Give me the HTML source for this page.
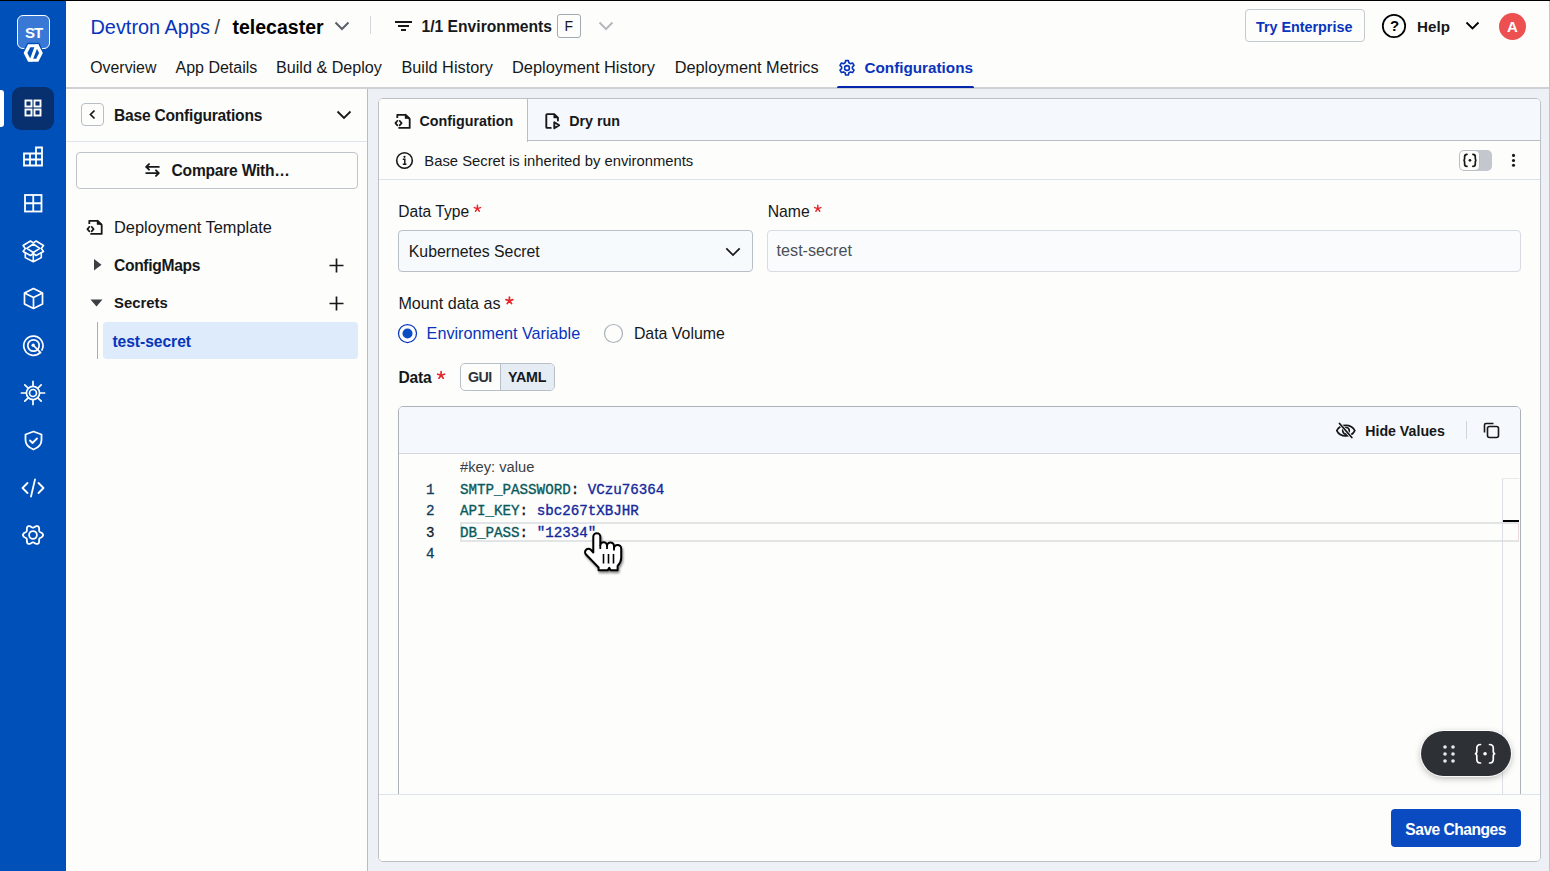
<!DOCTYPE html>
<html><head><meta charset="utf-8">
<style>
*{box-sizing:border-box;margin:0;padding:0}
html,body{width:1550px;height:871px;overflow:hidden;background:#fdfdfc;font-family:"Liberation Sans",sans-serif;color:#000;position:relative}
.abs{position:absolute}
.t{position:absolute;white-space:nowrap;line-height:1}
#topline{left:0;top:0;width:1550px;height:1px;background:#000;z-index:50}
#rightline{left:1549px;top:1px;width:1px;height:870px;background:#c4c6c8;z-index:50}
#nav{left:0;top:0;width:66px;height:871px;background:#0050b9}
</style></head><body>
<div id="topline" class="abs"></div>
<div id="rightline" class="abs"></div>
<div id="nav" class="abs">
  <div class="abs" style="left:17px;top:15px;width:33px;height:34px;border:1.2px solid #fff;border-radius:6px;background:#3a78d6"></div>
  <div class="t" style="left:25px;top:24.5px;font-size:15px;font-weight:bold;color:#fff;letter-spacing:-1px">ST</div>
  <svg class="abs" style="left:20px;top:40px" width="26" height="25" viewBox="0 0 26 25"><path d="M3.4 13 L8 4 H18.5 L23 13 L18.5 22 H8 Z" fill="#0050b9" stroke="#0050b9" stroke-width="2.4" stroke-linejoin="round"/><path d="M3.6 13 L8.1 4.2 H18.4 L22.8 13 L18.4 21.8 H8.1 Z" fill="#fff"/><path d="M7.4 13 L10.3 7.3 H16.2 L19.1 13 L16.2 18.7 H10.3 Z" fill="#0050b9"/><path d="M9 21.6 L15.4 4.4 H18.6 L12.2 21.6 Z" fill="#fff"/></svg>
  <div class="abs" style="left:0;top:90px;width:4px;height:37px;background:#fff;border-radius:0 3px 3px 0"></div>
  <div class="abs" style="left:12px;top:87px;width:42px;height:43px;background:#08306e;border-radius:9px"></div>
  <svg class="abs" style="left:24px;top:99px" width="19" height="19" viewBox="0 0 19 19" fill="none" stroke="#fff" stroke-width="1.9"><rect x="1.5" y="1.5" width="6" height="6"/><rect x="10.5" y="1.5" width="6" height="6"/><rect x="1.5" y="10.5" width="6" height="6"/><rect x="10.5" y="10.5" width="6" height="6"/></svg>
  <svg class="abs" style="left:23px;top:146px" width="21" height="21" viewBox="0 0 21 21" fill="none" stroke="#fff" stroke-width="1.8" stroke-linecap="square"><path d="M1 7.5 H19 M1 13.5 H19 M1 19.5 H19 M1 7.5 V19.5 M7 7.5 V19.5 M13 1.5 V19.5 M19 1.5 V19.5 M13 1.5 H19"/></svg>
  <svg class="abs" style="left:24px;top:194px" width="19" height="19" viewBox="0 0 19 19" fill="none" stroke="#fff" stroke-width="1.8"><rect x="1" y="1" width="16.5" height="16.5"/><path d="M9.25 1 V17.5 M1 9.25 H17.5"/></svg>
  <svg class="abs" style="left:20px;top:238px" width="26" height="26" viewBox="0 0 26 26" fill="none" stroke="#fff" stroke-width="1.6" stroke-linejoin="round"><path d="M3.1 7.5 L10.5 3 L13.3 4.8 L16.1 3 L23.5 7.5 L21.3 10.5 L23.5 13.5 L16.1 17.5 L13.3 15.5 L10.5 17.5 L3.1 13.5 L5.3 10.5 Z"/><path d="M13.3 6 L19.8 10.3 L13.3 14.5 L6.8 10.3 Z"/><path d="M5.3 14.8 V19.6 L13.3 23.8 L21.3 19.6 V14.8 M13.3 15.5 V23.8"/></svg>
  <svg class="abs" style="left:23px;top:287px" width="21" height="23" viewBox="0 0 21 23" fill="none" stroke="#fff" stroke-width="1.7" stroke-linejoin="round"><path d="M10.5 1.5 L19.5 6 V17 L10.5 21.5 L1.5 17 V6 Z"/><path d="M1.5 6 L10.5 10.5 L19.5 6 M10.5 10.5 V21.5"/></svg>
  <svg class="abs" style="left:22px;top:334.3px" width="23" height="23" viewBox="0 0 23 23" fill="none" stroke="#fff" stroke-width="1.7"><path d="M18.3 18.3 A9.6 9.6 0 1 1 19.6 16.6"/><circle cx="11.5" cy="11.5" r="5.7"/><path d="M11.5 11.5 L18.6 18.6" stroke-linecap="round"/><circle cx="11.2" cy="11.2" r="1.7" fill="#fff" stroke="none"/></svg>
  <svg class="abs" style="left:20.2px;top:380.3px" width="26" height="26" viewBox="0 0 26 26" fill="none" stroke="#fff" stroke-width="1.7" stroke-linecap="round"><circle cx="13" cy="13" r="6.6"/><circle cx="13" cy="13" r="3.5"/><path d="M13.00 5.80 L13.00 1.40 M18.09 7.91 L21.20 4.80 M20.20 13.00 L24.60 13.00 M18.09 18.09 L21.20 21.20 M13.00 20.20 L13.00 24.60 M7.91 18.09 L4.80 21.20 M5.80 13.00 L1.40 13.00 M7.91 7.91 L4.80 4.80 "/></svg>
  <svg class="abs" style="left:23px;top:430px" width="21" height="21" viewBox="0 0 21 21" fill="none" stroke="#fff" stroke-width="1.8" stroke-linejoin="round" stroke-linecap="round"><path d="M10.5 1.5 L18.5 4.5 V10 C18.5 15 14.5 18 10.5 19.5 C6.5 18 2.5 15 2.5 10 V4.5 Z"/><path d="M7 10.5 L9.5 13 L14 8.5"/></svg>
  <svg class="abs" style="left:21px;top:478px" width="24" height="20" viewBox="0 0 24 20" fill="none" stroke="#fff" stroke-width="1.8" stroke-linecap="round" stroke-linejoin="round"><path d="M6.5 5 L1.5 10 L6.5 15 M17.5 5 L22.5 10 L17.5 15 M14 1.5 L10 18.5"/></svg>
  <svg class="abs" style="left:21.3px;top:523.2px" width="24" height="24" viewBox="0 0 24 24" fill="none" stroke="#fff" stroke-width="1.8" stroke-linejoin="round"><path d="M22.05 12.00 L21.97 12.52 L21.74 13.02 L21.38 13.49 L20.92 13.90 L20.40 14.25 L19.88 14.56 L19.38 14.83 L18.95 15.09 L18.61 15.37 L18.37 15.67 L18.22 16.04 L18.15 16.47 L18.14 16.98 L18.16 17.54 L18.15 18.15 L18.10 18.78 L17.97 19.38 L17.76 19.92 L17.44 20.37 L17.02 20.70 L16.53 20.90 L15.98 20.95 L15.40 20.86 L14.82 20.67 L14.25 20.40 L13.72 20.10 L13.24 19.81 L12.80 19.57 L12.39 19.41 L12.00 19.35 L11.61 19.41 L11.20 19.57 L10.76 19.81 L10.28 20.10 L9.75 20.40 L9.18 20.67 L8.60 20.86 L8.02 20.95 L7.47 20.90 L6.98 20.70 L6.56 20.37 L6.24 19.92 L6.03 19.38 L5.90 18.78 L5.85 18.15 L5.84 17.54 L5.86 16.98 L5.85 16.47 L5.78 16.04 L5.63 15.67 L5.39 15.37 L5.05 15.09 L4.62 14.83 L4.12 14.56 L3.60 14.25 L3.08 13.90 L2.62 13.49 L2.26 13.02 L2.03 12.52 L1.95 12.00 L2.03 11.48 L2.26 10.98 L2.62 10.51 L3.08 10.10 L3.60 9.75 L4.12 9.44 L4.62 9.17 L5.05 8.91 L5.39 8.63 L5.63 8.33 L5.78 7.96 L5.85 7.53 L5.86 7.02 L5.84 6.46 L5.85 5.85 L5.90 5.22 L6.03 4.62 L6.24 4.08 L6.56 3.63 L6.97 3.30 L7.47 3.10 L8.02 3.05 L8.60 3.14 L9.18 3.33 L9.75 3.60 L10.28 3.90 L10.76 4.19 L11.20 4.43 L11.61 4.59 L12.00 4.65 L12.39 4.59 L12.80 4.43 L13.24 4.19 L13.72 3.90 L14.25 3.60 L14.82 3.33 L15.40 3.14 L15.98 3.05 L16.53 3.10 L17.02 3.30 L17.44 3.63 L17.76 4.08 L17.97 4.62 L18.10 5.22 L18.15 5.85 L18.16 6.46 L18.14 7.02 L18.15 7.53 L18.22 7.96 L18.37 8.33 L18.61 8.63 L18.95 8.91 L19.38 9.17 L19.88 9.44 L20.40 9.75 L20.92 10.10 L21.38 10.51 L21.74 10.98 L21.97 11.48 L22.05 12.00 Z"/><circle cx="12" cy="12" r="3.9"/></svg>
</div>

<div class="abs" style="left:65px;top:0px;width:1px;height:871px;background:#1a42b0;z-index:5"></div>
<div class="abs" style="left:66px;top:0px;width:1484px;height:88px;background:#fdfdfc;border-bottom:1px solid #d6d8db"></div>
<div class="t" style="left:90.50px;top:18.00px;font-size:19.9px;color:#0734bb;">Devtron Apps</div>
<div class="t" style="left:214.50px;top:17.00px;font-size:20px;color:#3b3f44;">/</div>
<div class="t" style="left:232.50px;top:18.00px;font-size:19.5px;font-weight:bold;color:#000;">telecaster</div>
<svg class="abs" style="left:334px;top:21px;" width="16" height="10" viewBox="0 0 16 10" ><path d="M1.5 1.5 L8 8 L14.5 1.5" fill="none" stroke="#5b6068" stroke-width="2"/></svg>
<div class="abs" style="left:370px;top:16px;width:1px;height:18px;background:#d3d7dc"></div>
<svg class="abs" style="left:394px;top:20px;" width="19" height="12" viewBox="0 0 19 12" ><path d="M1 2 H18 M4 6 H15 M7 10 H12" stroke="#16181a" stroke-width="1.8" fill="none"/></svg>
<div class="t" style="left:421.50px;top:19.00px;font-size:15.66px;font-weight:bold;color:#16181a;">1/1 Environments</div>
<div class="abs" style="left:557px;top:14px;width:24px;height:24px;border:1px solid #a3a9b0;border-radius:3px;background:#fdfdfc"></div>
<div class="t" style="left:564.50px;top:19.00px;font-size:14px;color:#16181a;">F</div>
<svg class="abs" style="left:598px;top:21px;" width="16" height="10" viewBox="0 0 16 10" ><path d="M1.5 1.5 L8 8 L14.5 1.5" fill="none" stroke="#b5b9be" stroke-width="2"/></svg>
<div class="t" style="left:90.30px;top:60.00px;font-size:15.85px;color:#16181a;">Overview</div>
<div class="t" style="left:175.50px;top:60.00px;font-size:16.0px;color:#16181a;">App Details</div>
<div class="t" style="left:276.00px;top:59.00px;font-size:16.15px;color:#16181a;">Build &amp; Deploy</div>
<div class="t" style="left:401.40px;top:59.00px;font-size:16.3px;color:#16181a;">Build History</div>
<div class="t" style="left:512.00px;top:59.00px;font-size:16.4px;color:#16181a;">Deployment History</div>
<div class="t" style="left:674.70px;top:59.00px;font-size:16.3px;color:#16181a;">Deployment Metrics</div>
<svg class="abs" style="left:838px;top:59px;" width="18" height="18" viewBox="0 0 18 18" ><path d="M7.6 1.6 h2.8 l0.5 2.2 l1.6 0.9 l2.1 -0.7 l1.4 2.4 l-1.6 1.5 v1.8 l1.6 1.5 l-1.4 2.4 l-2.1 -0.7 l-1.6 0.9 l-0.5 2.2 h-2.8 l-0.5 -2.2 l-1.6 -0.9 l-2.1 0.7 l-1.4 -2.4 l1.6 -1.5 v-1.8 l-1.6 -1.5 l1.4 -2.4 l2.1 0.7 l1.6 -0.9 Z" fill="none" stroke="#0734bb" stroke-width="1.6" stroke-linejoin="round"/><circle cx="9" cy="9" r="2.4" fill="none" stroke="#0734bb" stroke-width="1.6"/></svg>
<div class="t" style="left:864.50px;top:60.00px;font-size:15.25px;font-weight:bold;color:#0734bb;">Configurations</div>
<div class="abs" style="left:837px;top:86px;width:137px;height:2.3px;background:#0326ad;border-radius:1.5px 1.5px 0 0;z-index:6"></div>
<div class="abs" style="left:1245px;top:9px;width:120px;height:33px;border:1px solid #c5cad1;border-radius:4px"></div>
<div class="t" style="left:1256.00px;top:20.00px;font-size:14.33px;font-weight:bold;color:#0734bb;">Try Enterprise</div>
<svg class="abs" style="left:1381px;top:13px;" width="26" height="26" viewBox="0 0 26 26" ><circle cx="13" cy="13" r="11.2" fill="none" stroke="#000" stroke-width="1.75"/></svg>
<div class="t" style="left:1390.00px;top:18.00px;font-size:15px;font-weight:bold;color:#000;">?</div>
<div class="t" style="left:1417.00px;top:19.00px;font-size:15.2px;font-weight:bold;color:#16181a;">Help</div>
<svg class="abs" style="left:1465px;top:21px;" width="15" height="10" viewBox="0 0 15 10" ><path d="M1.5 1.5 L7.5 7.5 L13.5 1.5" fill="none" stroke="#000" stroke-width="1.8"/></svg>
<div class="abs" style="left:1499px;top:13px;width:27px;height:27px;background:#ed5050;border-radius:50%"></div>
<div class="t" style="left:1507.00px;top:19.00px;font-size:15px;font-weight:bold;color:#fff;">A</div>
<div class="abs" style="left:66px;top:88px;width:302px;height:783px;background:#fdfdfc;border-right:1px solid #b9bdc3"></div>
<div class="abs" style="left:81px;top:103px;width:23px;height:23px;border:1px solid #b8bec6;border-radius:4px"></div>
<svg class="abs" style="left:81px;top:103px;" width="23" height="23" viewBox="0 0 23 23" ><path d="M13.5 7.5 L9.5 11.5 L13.5 15.5" fill="none" stroke="#16181a" stroke-width="1.7"/></svg>
<div class="t" style="left:114.00px;top:108.00px;font-size:15.6px;font-weight:bold;color:#16181a;letter-spacing:-0.228px;">Base Configurations</div>
<svg class="abs" style="left:336px;top:110px;" width="16" height="10" viewBox="0 0 16 10" ><path d="M1.5 1.5 L8 8 L14.5 1.5" fill="none" stroke="#16181a" stroke-width="1.8"/></svg>
<div class="abs" style="left:66px;top:141px;width:301px;height:1px;background:#dfe4ec"></div>
<div class="abs" style="left:76px;top:152px;width:282px;height:37px;border:1px solid #bfc4cb;border-radius:4px"></div>
<svg class="abs" style="left:144px;top:161px;" width="17" height="16" viewBox="0 0 17 16" ><path d="M2.2 5.9 H14.8 M5 3.1 L2.2 5.9 L5 8.7 M14.8 12.1 H2.2 M12 9.3 L14.8 12.1 L12 14.9" fill="none" stroke="#16181a" stroke-width="1.9" stroke-linecap="round" stroke-linejoin="round"/></svg>
<div class="t" style="left:171.60px;top:163.00px;font-size:15.6px;font-weight:bold;color:#16181a;letter-spacing:-0.233px;">Compare With…</div>
<svg class="abs" style="left:86px;top:218px;" width="18" height="18" viewBox="0 0 18 18" ><path d="M3.3 6 V2.8 H11.5 L15.7 7 V15.9 H4.4" fill="none" stroke="#16181a" stroke-width="1.8" stroke-linejoin="round"/><path d="M11.4 2.5 V6.2 H15.4 Z" fill="#16181a" stroke="#16181a" stroke-width="1.2" stroke-linejoin="round"/><path d="M3.4 8.8 L1.4 11.1 L3.4 13.4 M5.6 8.8 L7.6 11.1 L5.6 13.4" fill="none" stroke="#16181a" stroke-width="1.7" stroke-linecap="round" stroke-linejoin="round"/></svg>
<div class="t" style="left:114.00px;top:219.00px;font-size:16.37px;color:#16181a;">Deployment Template</div>
<svg class="abs" style="left:92px;top:258px;" width="12" height="14" viewBox="0 0 12 14" ><path d="M2 1 L9.5 6.8 L2 12.6 Z" fill="#3b3f44"/></svg>
<div class="t" style="left:114.00px;top:258.00px;font-size:15.6px;font-weight:bold;color:#16181a;letter-spacing:-0.318px;">ConfigMaps</div>
<svg class="abs" style="left:329px;top:258px;" width="15" height="15" viewBox="0 0 15 15" ><path d="M7.5 0.5 V14.5 M0.5 7.5 H14.5" stroke="#16181a" stroke-width="1.7"/></svg>
<svg class="abs" style="left:89px;top:298px;" width="15" height="10" viewBox="0 0 15 10" ><path d="M1.5 1.5 H13.5 L7.5 8.5 Z" fill="#3b3f44"/></svg>
<div class="t" style="left:114.00px;top:296.00px;font-size:14.9px;font-weight:bold;color:#16181a;">Secrets</div>
<svg class="abs" style="left:329px;top:296px;" width="15" height="15" viewBox="0 0 15 15" ><path d="M7.5 0.5 V14.5 M0.5 7.5 H14.5" stroke="#16181a" stroke-width="1.7"/></svg>
<div class="abs" style="left:97px;top:322px;width:1px;height:37px;background:#a8adb4"></div>
<div class="abs" style="left:103px;top:322px;width:255px;height:37px;background:#ddebfa;border-radius:4px"></div>
<div class="t" style="left:112.40px;top:334.00px;font-size:15.6px;font-weight:bold;color:#0734bb;letter-spacing:-0.030px;">test-secret</div>
<div class="abs" style="left:368px;top:88px;width:1182px;height:783px;background:#edf1f5"></div>
<div class="abs" style="left:66px;top:87px;width:1484px;height:2px;background:#cfd2d5"></div>
<div class="abs" style="left:378px;top:98px;width:1163px;height:764px;background:#fdfdfc;border:1px solid #bcc0c6;border-radius:5px;overflow:hidden">
<div class="abs" style="left:-379px;top:-99px;width:1550px;height:871px">
<div class="abs" style="left:378px;top:98px;width:1163px;height:43px;background:#f5f8fc;border-bottom:1px solid #b9bdc4"></div>
<div class="abs" style="left:378px;top:98px;width:150px;height:44px;background:#fdfdfc;border-right:1px solid #b9bdc4"></div>
<svg class="abs" style="left:394px;top:111.6px;" width="18" height="18" viewBox="0 0 18 18" ><path d="M3.3 6 V2.8 H11.5 L15.7 7 V15.9 H4.4" fill="none" stroke="#16181a" stroke-width="1.8" stroke-linejoin="round"/><path d="M11.4 2.5 V6.2 H15.4 Z" fill="#16181a" stroke="#16181a" stroke-width="1.2" stroke-linejoin="round"/><path d="M3.4 8.8 L1.4 11.1 L3.4 13.4 M5.6 8.8 L7.6 11.1 L5.6 13.4" fill="none" stroke="#16181a" stroke-width="1.7" stroke-linecap="round" stroke-linejoin="round"/></svg>
<div class="t" style="left:419.50px;top:114.00px;font-size:14.3px;font-weight:bold;color:#16181a;">Configuration</div>
<svg class="abs" style="left:538px;top:106px;" width="28" height="28" viewBox="0 0 28 28" ><path d="M12.8 21.9 H9 Q8.3 21.9 8.3 21 V9 Q8.3 8.1 9.2 8.1 H16.2 L19.9 11.6 V14.5" fill="none" stroke="#16181a" stroke-width="1.9" stroke-linejoin="round" stroke-linecap="round"/><path d="M16 8.3 V11.6 H19.6 Z" fill="#16181a" stroke="#16181a" stroke-width="1.1" stroke-linejoin="round"/><path d="M16.3 16.2 L21.2 19.2 L16.3 22.2 Z" fill="none" stroke="#16181a" stroke-width="1.9" stroke-linejoin="round"/></svg>
<div class="t" style="left:569.20px;top:114.00px;font-size:14.3px;font-weight:bold;color:#16181a;">Dry run</div>
<svg class="abs" style="left:395px;top:151px;" width="19" height="19" viewBox="0 0 19 19" ><circle cx="9.5" cy="9.5" r="7.8" fill="none" stroke="#16181a" stroke-width="1.6"/><circle cx="9.5" cy="5.8" r="1.1" fill="#16181a"/><path d="M7.8 8.3 H9.8 V13.3 M7.8 13.3 H11.4" fill="none" stroke="#16181a" stroke-width="1.5"/></svg>
<div class="t" style="left:424.30px;top:154.00px;font-size:14.8px;color:#16181a;">Base Secret is inherited by environments</div>
<div class="abs" style="left:1459px;top:150px;width:33px;height:21px;background:#c4c8ce;border-radius:5px"></div>
<div class="abs" style="left:1460px;top:151px;width:19px;height:19px;background:#fdfdfc;border-radius:4px;box-shadow:0 0 0 0.5px #b0b5bb"></div>
<svg class="abs" style="left:0;top:0;overflow:visible" width="1" height="1"><path d="M1467.02 154.30 Q1464.60 154.30 1464.60 156.70 V158.86 Q1464.60 160.30 1463.30 160.30 Q1464.60 160.30 1464.60 161.74 V163.90 Q1464.60 166.30 1467.02 166.30 M1472.88 154.30 Q1475.30 154.30 1475.30 156.70 V158.86 Q1475.30 160.30 1476.60 160.30 Q1475.30 160.30 1475.30 161.74 V163.90 Q1475.30 166.30 1472.88 166.30" stroke="#16181a" stroke-width="1.7" fill="none" stroke-linecap="round"/><circle cx="1469.95" cy="160.30" r="1.35" fill="#16181a"/></svg>
<svg class="abs" style="left:1510px;top:153px;" width="7" height="16" viewBox="0 0 7 16" ><circle cx="3.5" cy="2.4" r="1.55" fill="#16181a"/><circle cx="3.5" cy="7.5" r="1.55" fill="#16181a"/><circle cx="3.5" cy="12.3" r="1.55" fill="#16181a"/></svg>
<div class="abs" style="left:378px;top:179px;width:1163px;height:1px;background:#dde3ec"></div>
<div class="t" style="left:398.30px;top:204.00px;font-size:15.6px;color:#16181a;">Data Type</div>
<svg class="abs" style="left:0;top:0;overflow:visible" width="1" height="1"><path d="M477.40 208.60 L477.40 205.30 M477.40 208.60 L480.54 207.58 M477.40 208.60 L479.34 211.27 M477.40 208.60 L475.46 211.27 M477.40 208.60 L474.26 207.58 " stroke="#e5262a" stroke-width="1.45" stroke-linecap="round" fill="none"/></svg>
<div class="t" style="left:767.70px;top:204.00px;font-size:15.75px;color:#16181a;">Name</div>
<svg class="abs" style="left:0;top:0;overflow:visible" width="1" height="1"><path d="M817.80 208.60 L817.80 205.30 M817.80 208.60 L820.94 207.58 M817.80 208.60 L819.74 211.27 M817.80 208.60 L815.86 211.27 M817.80 208.60 L814.66 207.58 " stroke="#e5262a" stroke-width="1.45" stroke-linecap="round" fill="none"/></svg>
<div class="abs" style="left:398px;top:230px;width:355px;height:42px;background:#f7fafc;border:1px solid #b9bfc7;border-radius:4px"></div>
<div class="t" style="left:408.80px;top:244.00px;font-size:15.82px;color:#16181a;">Kubernetes Secret</div>
<svg class="abs" style="left:724px;top:245px;" width="18" height="12" viewBox="0 0 18 12" ><path d="M2.3 3.3 L9 10 L15.7 3.3" fill="none" stroke="#16181a" stroke-width="1.75"/></svg>
<div class="abs" style="left:767px;top:230px;width:754px;height:42px;background:#f9fbfd;border:1px solid #d8dce1;border-radius:4px"></div>
<div class="t" style="left:776.60px;top:242.00px;font-size:16.15px;color:#4a4f55;">test-secret</div>
<div class="t" style="left:398.40px;top:295.00px;font-size:16.14px;color:#16181a;">Mount data as</div>
<svg class="abs" style="left:0;top:0;overflow:visible" width="1" height="1"><path d="M509.40 300.70 L509.40 297.10 M509.40 300.70 L512.82 299.59 M509.40 300.70 L511.52 303.61 M509.40 300.70 L507.28 303.61 M509.40 300.70 L505.98 299.59 " stroke="#e5262a" stroke-width="1.7" stroke-linecap="round" fill="none"/></svg>
<svg class="abs" style="left:397px;top:323px;" width="21" height="21" viewBox="0 0 21 21" ><circle cx="10.5" cy="10.5" r="9" fill="#fdfdfc" stroke="#0734bb" stroke-width="1.25"/><circle cx="10.5" cy="10.5" r="5" fill="#0a4cc4"/></svg>
<div class="t" style="left:426.60px;top:325.00px;font-size:16.2px;color:#0734bb;">Environment Variable</div>
<svg class="abs" style="left:603px;top:323px;" width="21" height="21" viewBox="0 0 21 21" ><circle cx="10.5" cy="10.5" r="9" fill="#fdfdfc" stroke="#aab0b8" stroke-width="1.2"/></svg>
<div class="t" style="left:633.90px;top:326.00px;font-size:15.9px;color:#16181a;">Data Volume</div>
<div class="t" style="left:398.40px;top:370.00px;font-size:15.6px;font-weight:bold;color:#16181a;letter-spacing:-0.145px;">Data</div>
<svg class="abs" style="left:0;top:0;overflow:visible" width="1" height="1"><path d="M441.10 375.30 L441.10 371.70 M441.10 375.30 L444.52 374.19 M441.10 375.30 L443.22 378.21 M441.10 375.30 L438.98 378.21 M441.10 375.30 L437.68 374.19 " stroke="#e5262a" stroke-width="1.7" stroke-linecap="round" fill="none"/></svg>
<div class="abs" style="left:460px;top:363px;width:95px;height:28px;border:1px solid #b9bfc7;border-radius:5px;background:#fdfdfc;overflow:hidden"></div>
<div class="abs" style="left:500px;top:364px;width:54px;height:26px;background:#e6ecf4;border-left:1px solid #b9bfc7;border-radius:0 4px 4px 0"></div>
<div class="t" style="left:468.00px;top:370.00px;font-size:14.25px;font-weight:bold;color:#2f3338;letter-spacing:-0.516px;">GUI</div>
<div class="t" style="left:507.90px;top:370.00px;font-size:14.25px;font-weight:bold;color:#16181a;letter-spacing:-0.155px;">YAML</div>
<div class="abs" style="left:398px;top:406px;width:1123px;height:460px;background:#fdfdfc;border:1px solid #adb2b9;border-radius:5px 5px 0 0"></div>
<div class="abs" style="left:399px;top:407px;width:1121px;height:47px;background:#f5f8fc;border-bottom:1.5px solid #d3d7dc;border-radius:4px 4px 0 0"></div>
<svg class="abs" style="left:1335px;top:420.5px;" width="21" height="19" viewBox="0 0 21 19" ><path d="M1.8 9.6 C5 2.6 16.5 2.6 19.8 9.6 C16.5 16.6 5 16.6 1.8 9.6 Z" fill="none" stroke="#16181a" stroke-width="1.7"/><circle cx="11" cy="9.8" r="3.3" fill="none" stroke="#16181a" stroke-width="1.7"/><path d="M4.5 2.5 L16.8 16.5" stroke="#f5f8fc" stroke-width="3.2"/><path d="M4.5 2.5 L16.8 16.5" stroke="#16181a" stroke-width="1.8" stroke-linecap="round"/></svg>
<div class="t" style="left:1365.20px;top:424.00px;font-size:14.2px;font-weight:bold;color:#16181a;">Hide Values</div>
<div class="abs" style="left:1466px;top:421px;width:1px;height:18px;background:#d0d4d9"></div>
<svg class="abs" style="left:1482px;top:421px;" width="19" height="18" viewBox="0 0 19 18" ><rect x="5.5" y="5.5" width="11" height="11" rx="2" fill="none" stroke="#16181a" stroke-width="1.6"/><path d="M2.5 11.5 V4 Q2.5 2.5 4 2.5 H11.5" fill="none" stroke="#16181a" stroke-width="1.6"/></svg>
<div class="t" style="left:460.00px;top:460.00px;font-size:14.7px;color:#3b3f44;">#key: value</div>
<div class="abs" style="left:460px;top:521.5px;width:1059px;height:20.5px;border:2px solid #e3e4e6;border-right:1px solid #ead9dc"></div>
<div class="t" style="left:426.00px;top:483.00px;font-size:14.2px;color:#0f3d5e;font-family:'Liberation Mono',monospace;-webkit-text-stroke:0.3px currentColor">1</div>
<div class="t" style="left:460.00px;top:483.00px;font-size:14.2px;color:#16181a;font-family:'Liberation Mono',monospace;-webkit-text-stroke:0.35px currentColor"><span style="color:#0a5a5c">SMTP_PASSWORD</span><span style="color:#16181a">:</span> <span style="color:#13289a">VCzu76364</span></div>
<div class="t" style="left:426.00px;top:504.00px;font-size:14.2px;color:#0f3d5e;font-family:'Liberation Mono',monospace;-webkit-text-stroke:0.3px currentColor">2</div>
<div class="t" style="left:460.00px;top:504.00px;font-size:14.2px;color:#16181a;font-family:'Liberation Mono',monospace;-webkit-text-stroke:0.35px currentColor"><span style="color:#0a5a5c">API_KEY</span><span style="color:#16181a">:</span> <span style="color:#13289a">sbc267tXBJHR</span></div>
<div class="t" style="left:426.00px;top:526.00px;font-size:14.2px;color:#10202e;font-family:'Liberation Mono',monospace;-webkit-text-stroke:0.3px currentColor">3</div>
<div class="t" style="left:460.00px;top:526.00px;font-size:14.2px;color:#16181a;font-family:'Liberation Mono',monospace;-webkit-text-stroke:0.35px currentColor"><span style="color:#0a5a5c">DB_PASS</span><span style="color:#16181a">:</span> <span style="color:#13289a">"12334"</span></div>
<div class="t" style="left:426.00px;top:547.00px;font-size:14.2px;color:#0f3d5e;font-family:'Liberation Mono',monospace;-webkit-text-stroke:0.3px currentColor">4</div>
<div class="abs" style="left:1502px;top:478px;width:1px;height:316px;background:#dcdfe3"></div>
<div class="abs" style="left:1502px;top:478px;width:17px;height:1px;background:#e8eaec"></div>
<div class="abs" style="left:1503px;top:520px;width:16px;height:2px;background:#000"></div>
<div class="abs" style="left:1421px;top:731px;width:90px;height:45px;background:#2d3035;border-radius:23px;box-shadow:0 0 0 1px rgba(255,255,255,0.9),0 2px 7px rgba(0,0,0,0.3)"></div>
<svg class="abs" style="left:1441px;top:744px;" width="16" height="20" viewBox="0 0 16 20" ><g fill="#e8eaec"><circle cx="4" cy="3" r="1.8"/><circle cx="12" cy="3" r="1.8"/><circle cx="4" cy="10" r="1.8"/><circle cx="12" cy="10" r="1.8"/><circle cx="4" cy="17" r="1.8"/><circle cx="12" cy="17" r="1.8"/></g></svg>
<svg class="abs" style="left:0;top:0;overflow:visible" width="1" height="1"><path d="M1480.54 744.50 Q1476.81 744.50 1476.81 748.20 V751.53 Q1476.81 753.75 1474.80 753.75 Q1476.81 753.75 1476.81 755.97 V759.30 Q1476.81 763.00 1480.54 763.00 M1489.56 744.50 Q1493.29 744.50 1493.29 748.20 V751.53 Q1493.29 753.75 1495.30 753.75 Q1493.29 753.75 1493.29 755.97 V759.30 Q1493.29 763.00 1489.56 763.00" stroke="#fff" stroke-width="1.7" fill="none" stroke-linecap="round"/><circle cx="1485.05" cy="753.75" r="1.8" fill="#fff"/></svg>
<div class="abs" style="left:378px;top:794px;width:1163px;height:68px;background:#fdfdfc;border-top:1px solid #dfe4ec"></div>
<div class="abs" style="left:1391px;top:809px;width:130px;height:38px;background:#0a4bc2;border-radius:4px"></div>
<div class="t" style="left:1405.30px;top:822.00px;font-size:15.6px;font-weight:bold;color:#fff;letter-spacing:-0.497px;">Save Changes</div>
<svg class="abs" style="left:578px;top:524px;filter:drop-shadow(1px 2px 1.2px rgba(0,0,0,0.45))" width="50" height="52" viewBox="0 0 50 52" ><path d="M20.6 46.3 L20.6 43.5 L8 30.5 A3.3 3.3 0 0 1 12.8 25.8 L15.3 28.5 L15.3 12.8 A3.5 3.5 0 0 1 22.3 12.8 L22.3 21.6 A3.35 3.35 0 0 1 29 21.6 L29 22 A3.5 3.5 0 0 1 36 22 L36 24.5 A3.6 3.6 0 0 1 43.2 24.5 L43.2 34 Q43.2 38 39.6 42 L39.6 46.3 L32.5 46.3 L31.2 43.8 L29.8 46.3 Z" fill="#fff" stroke="#000" stroke-width="2" stroke-linejoin="round"/><path d="M22.3 21.6 V25 M29 22 V25 M36 24.5 V26.5" stroke="#000" stroke-width="1.8"/><path d="M25.5 30 V39.5 M30.5 30 V39.5 M35.5 30 V39.5" stroke="#000" stroke-width="1.6"/></svg>
</div></div>
</body></html>
